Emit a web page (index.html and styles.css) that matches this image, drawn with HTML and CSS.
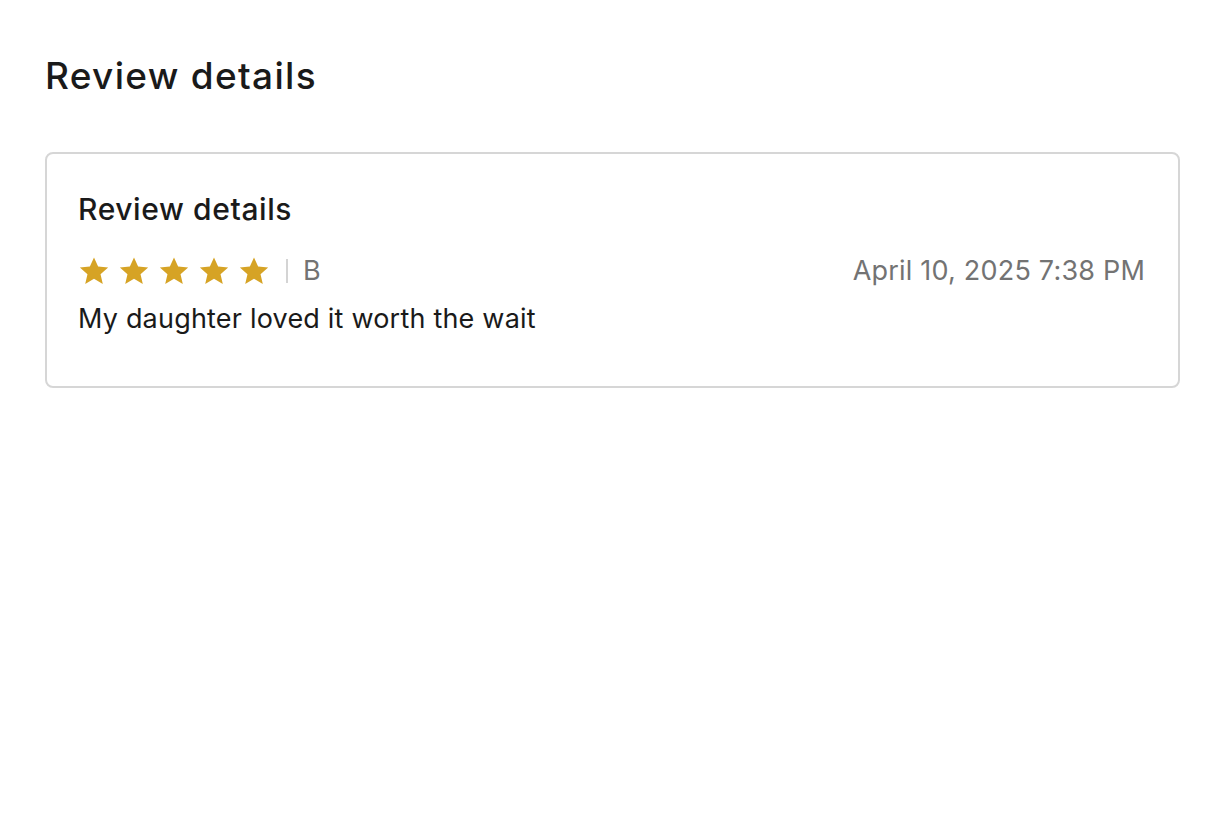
FILE: index.html
```html
<!DOCTYPE html>
<html lang="en">
<head>
    <meta charset="utf-8">
    <title>Review details</title>
    <link rel="stylesheet" href="styles.css">
</head>
<body>
<main class="page">
    <h1 class="pageTitle">Review details</h1>

    <!-- 评论卡片 -->
    <section class="card">
        <h2 class="cardTitle">Review details</h2>
        <div class="metaRow">
            <div class="metaLeft">
                <div class="stars">
                    <svg class="star" viewBox="0 0 24 24"><path d="M12 1.8l3.1 6.9 7.5.7-5.7 5 1.7 7.4L12 17.9l-6.6 3.9 1.7-7.4-5.7-5 7.5-.7z"/></svg>
                    <svg class="star" viewBox="0 0 24 24"><path d="M12 1.8l3.1 6.9 7.5.7-5.7 5 1.7 7.4L12 17.9l-6.6 3.9 1.7-7.4-5.7-5 7.5-.7z"/></svg>
                    <svg class="star" viewBox="0 0 24 24"><path d="M12 1.8l3.1 6.9 7.5.7-5.7 5 1.7 7.4L12 17.9l-6.6 3.9 1.7-7.4-5.7-5 7.5-.7z"/></svg>
                    <svg class="star" viewBox="0 0 24 24"><path d="M12 1.8l3.1 6.9 7.5.7-5.7 5 1.7 7.4L12 17.9l-6.6 3.9 1.7-7.4-5.7-5 7.5-.7z"/></svg>
                    <svg class="star" viewBox="0 0 24 24"><path d="M12 1.8l3.1 6.9 7.5.7-5.7 5 1.7 7.4L12 17.9l-6.6 3.9 1.7-7.4-5.7-5 7.5-.7z"/></svg>
                </div>
                <span class="divider"></span>
                <span class="author">B</span>
            </div>
            <span class="date">April 10, 2025 7:38 PM</span>
        </div>
        <p class="reviewText">My daughter loved it worth the wait</p>
    </section>
</main>
</body>
</html>
```

FILE: styles.css
```css
* {
    margin: 0;
    padding: 0;
    box-sizing: border-box;
}

body {
    background-color: #fff;
    color: #1a1a1a;
    font-family: Inter, "Noto Sans", sans-serif;
}

.page {
    padding: 52px 49px 0 45px;
}

/* 页面标题 */
.pageTitle {
    font-size: 37px;
    font-weight: 500;
    line-height: 48px;
    letter-spacing: 1.3px;
    margin-bottom: 52px;
}

/* 卡片 */
.card {
    border: 2px solid #d6d6d6;
    border-radius: 8px;
    padding: 35px 33px 49px 31px;
}

.cardTitle {
    font-size: 30px;
    font-weight: 500;
    line-height: 40px;
    letter-spacing: 0.6px;
    margin-bottom: 24px;
}

.metaRow {
    display: flex;
    justify-content: space-between;
    align-items: center;
    height: 36px;
}

.metaLeft {
    display: flex;
    align-items: center;
}

.stars {
    display: flex;
    gap: 8px;
}

.star {
    width: 32px;
    height: 32px;
    fill: #d6a325;
}

.divider {
    width: 2px;
    height: 24px;
    background-color: #d4d4d4;
    margin: 0 15px 0 16px;
}

.author,
.date {
    font-size: 27px;
    color: #737373;
    line-height: 36px;
    letter-spacing: 0.2px;
}

.reviewText {
    font-size: 27px;
    line-height: 36px;
    letter-spacing: 0.2px;
    margin-top: 12px;
}
```
